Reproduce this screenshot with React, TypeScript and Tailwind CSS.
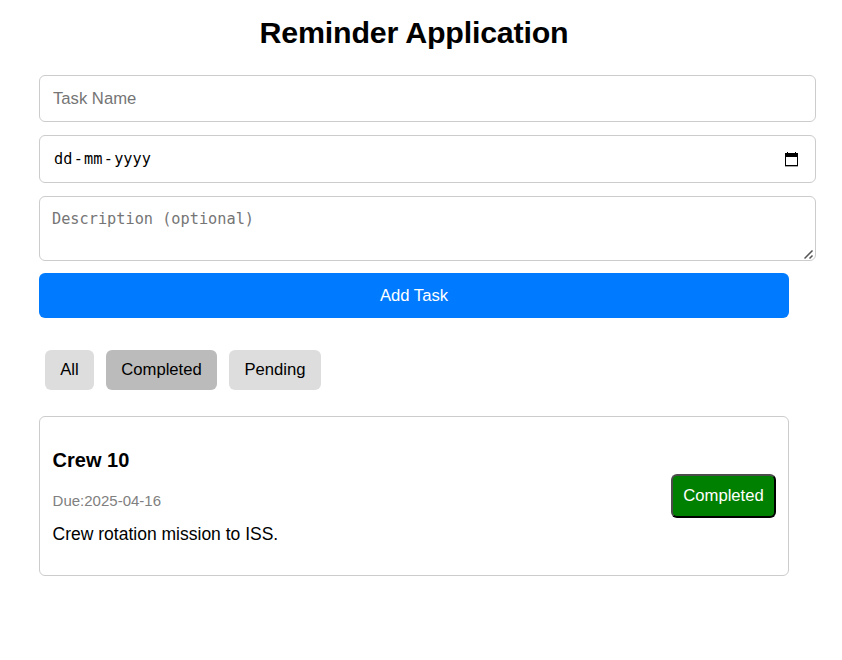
import { useState } from "react";

const filters = [
  { label: "All", size: "w-[49px]" },
  { label: "Completed", size: "w-[111px]" },
  { label: "Pending", size: "w-[92px]" },
];

function CalendarIcon() {
  return (
    <svg width="13" height="15" viewBox="0 0 13 15" shapeRendering="crispEdges">
      <path d="M2 0h1v1h-1zM10 0h1v1h-1zM0 1h13v4H0zM0 5h1v9H0zM12 5h1v9h-1zM0 13h13v1H0z" />
      <path d="M0 14h13v1H0z" fillOpacity="0.35" />
    </svg>
  );
}

export default function App() {
  const [active, setActive] = useState("Completed");
  return (
    <div className="h-[660px] w-[842px] overflow-hidden bg-white pl-[39px] font-['Liberation_Sans',Arial,sans-serif] text-black">
      <h1 className="h-[75px] w-[750px] pt-[15px] text-center text-[30.4px] leading-[35px] font-bold tracking-[-0.2px]">
        Reminder Application
      </h1>
      <form className="flex w-[777px] flex-col" onSubmit={(e) => e.preventDefault()}>
        <input
          type="text"
          placeholder="Task Name"
          className="h-[47px] w-full rounded-[6px] border border-[#ccc] px-[13px] text-[16.67px] placeholder:text-[#757575]"
        />
        <div className="mt-[13px] flex h-[48px] items-center justify-between rounded-[6px] border border-[#ccc] pr-[17px] pl-[14px]">
          <div className="flex gap-[1.25px] font-['DejaVu_Sans_Mono',monospace] text-[15.25px] leading-[20px]">
            <span>dd</span>
            <span>-</span>
            <span>mm</span>
            <span>-</span>
            <span>yyyy</span>
          </div>
          <CalendarIcon />
        </div>
        <div className="relative mt-[13px] h-[65px]">
          <textarea
            placeholder="Description (optional)"
            className="block h-full w-full resize-none rounded-[6px] border border-[#ccc] px-[12px] py-[12px] font-['DejaVu_Sans_Mono',monospace] text-[15.25px] leading-[20px] placeholder:text-[#757575]"
          />
          <svg className="absolute right-[2px] bottom-[1px]" width="10" height="10" viewBox="0 0 10 10" fill="none" stroke="#555" strokeWidth="1.5">
            <path d="M0.5 8.5L8.5 0.5M5.5 8.5L8.5 5.5" />
          </svg>
        </div>
        <button className="mt-[12px] h-[45px] w-[750px] rounded-[6px] bg-[#007bff] text-[16.67px] text-white">
          Add Task
        </button>
      </form>
      <div className="mt-[32px] flex gap-[12px] pl-[6px]">
        {filters.map(({ label, size }) => (
          <button
            key={label}
            onClick={() => setActive(label)}
            className={`h-[40px] rounded-[6px] pb-[2px] text-[16.67px] ${size} ${active === label ? "bg-[#bbb]" : "bg-[#ddd]"}`}
          >
            {label}
          </button>
        ))}
      </div>
      <section className="mt-[26px] flex h-[160px] w-[750px] items-center justify-between rounded-[6px] border border-[#ccc] px-[12px]">
        <div className="flex flex-col pt-[1px] pl-[0.6px]">
          <h3 className="text-[20px] leading-[22px] font-bold">Crew 10</h3>
          <p className="mt-[21px] text-[15px] leading-[18px] text-[gray]">Due:2025-04-16</p>
          <p className="mt-[14px] text-[17.5px] leading-[20px]">Crew rotation mission to ISS.</p>
        </div>
        <button className="h-[44px] w-[105px] rounded-[6px] border-2 border-t-[#4c4c4c] border-r-black border-b-black border-l-[#4c4c4c] bg-[green] pb-[2px] text-[16.67px] text-white">
          Completed
        </button>
      </section>
    </div>
  );
}
